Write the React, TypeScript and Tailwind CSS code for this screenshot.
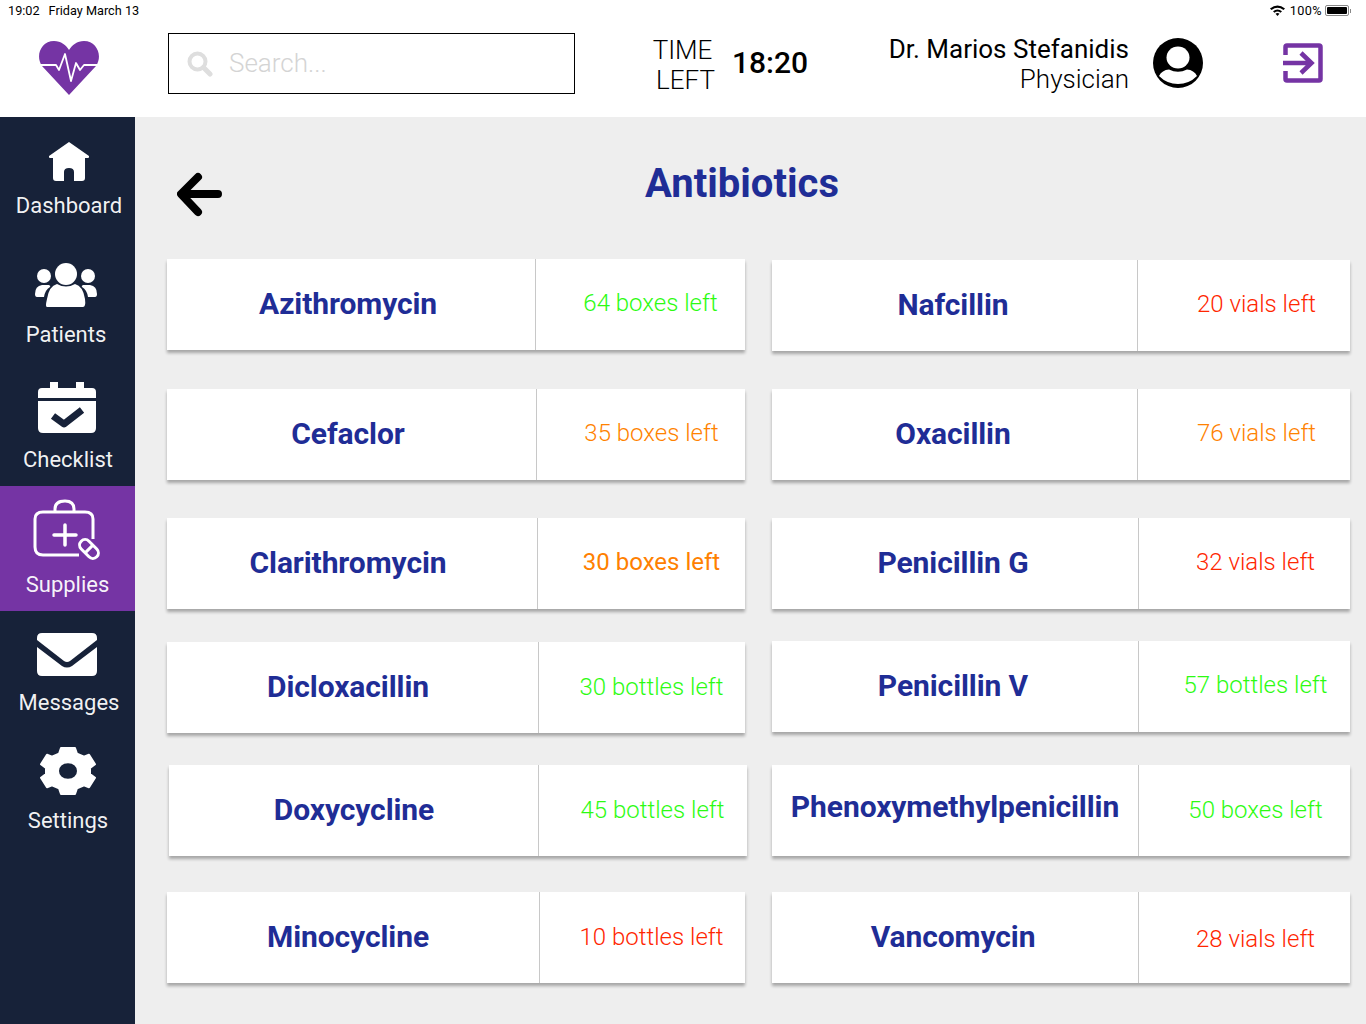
const green = "text-[#2dfb12]";
const orange = "text-[#ff8200]";
const red = "text-[#ff2600]";

const leftRows = [
  { name: "Azithromycin", qty: "64 boxes left", tone: green, box: "mt-[142px] ml-[32px]", nameBox: "w-[369px] pr-[6px] pb-[2px]", qtyBox: "pl-[20px] pb-[4px]" },
  { name: "Cefaclor", qty: "35 boxes left", tone: orange, box: "mt-[39px] ml-[32px]", nameBox: "w-[370px] pr-[7px] pb-[2px]", qtyBox: "pl-[21px] pb-[4px]" },
  { name: "Clarithromycin", qty: "30 boxes left", tone: "text-[#ff8000] font-normal", box: "mt-[38px] ml-[32px]", nameBox: "w-[371px] pr-[8px] pb-[2px]", qtyBox: "pl-[20px] pb-[4px]" },
  { name: "Dicloxacillin", qty: "30 bottles left", tone: green, box: "mt-[33px] ml-[32px]", nameBox: "w-[372px] pr-[9px] pb-[2px]", qtyBox: "pl-[19px] pb-[2px]" },
  { name: "Doxycycline", qty: "45 bottles left", tone: green, box: "mt-[32px] ml-[34px]", nameBox: "w-[370px] pl-[1px] pb-[2px]", qtyBox: "pl-[19px] pb-[2px]" },
  { name: "Minocycline", qty: "10 bottles left", tone: red, box: "mt-[36px] ml-[32px]", nameBox: "w-[373px] pr-[10px] pb-[2px]", qtyBox: "pl-[18px] pb-[2px]" },
];

const rightRows = [
  { name: "Nafcillin", qty: "20 vials left", tone: red, box: "mt-[143px]", nameBox: "w-[366px] pr-[3px] pb-[2px]", qtyBox: "pl-[25px] pb-[4px]" },
  { name: "Oxacillin", qty: "76 vials left", tone: orange, box: "mt-[38px]", nameBox: "w-[366px] pr-[3px] pb-[2px]", qtyBox: "pl-[25px] pb-[4px]" },
  { name: "Penicillin G", qty: "32 vials left", tone: red, box: "mt-[38px]", nameBox: "w-[367px] pr-[4px] pb-[2px]", qtyBox: "pl-[22px] pb-[4px]" },
  { name: "Penicillin V", qty: "57 bottles left", tone: green, box: "mt-[32px]", nameBox: "w-[367px] pr-[4px] pb-[2px]", qtyBox: "pl-[22px] pb-[4px]" },
  { name: "Phenoxymethylpenicillin", qty: "50 boxes left", tone: green, box: "mt-[33px]", nameBox: "w-[367px] pb-[9px]", qtyBox: "pl-[22px] pb-[2px]" },
  { name: "Vancomycin", qty: "28 vials left", tone: red, box: "mt-[36px]", nameBox: "w-[367px] pr-[4px] pb-[2px]", qtyBox: "pl-[22px] pt-[3px]" },
];

function HeartLogo() {
  return (
    <svg width="62" height="58" viewBox="0 0 62 58">
      <path d="M31 56 L4 27 C-3 17 3 2 16 2 C23 2 28 6 31 11 C34 6 39 2 46 2 C59 2 65 17 58 27 Z" fill="#7534a4" />
      <path d="M1 26 H18 L21 31 L27 15 L33 42 L38 24 L42 31 L46 26 H61" fill="none" stroke="#fff" strokeWidth="1.8" strokeLinejoin="round" />
    </svg>
  );
}

function HomeIcon() {
  return (
    <svg width="42" height="42" viewBox="0 0 42 42" fill="#fff">
      <path d="M21 1 L41 15 Q41.5 17 40 17 L37 17 L37 37 Q37 40 34 40 L26 40 L26 31 Q26 27 21 27 Q16 27 16 31 L16 40 L8 40 Q5 40 5 37 L5 17 L2 17 Q0.5 17 1 15 Z" />
    </svg>
  );
}

function UsersIcon() {
  return (
    <svg width="64" height="46" viewBox="0 0 64 46" fill="#fff">
      <circle cx="32" cy="12" r="11" />
      <circle cx="10" cy="14" r="7" />
      <circle cx="54" cy="14" r="7" />
      <path d="M13 45 Q11 45 13 37 Q15 24 23 22 Q32 27 41 22 Q49 24 51 37 Q52 45 49 45 Z" />
      <path d="M1 32 Q1 24 8 23 L15 23 Q17 24 16 25 Q11 28 10 35 L3 35 Q1 35 1 32 Z" />
      <path d="M63 32 Q63 24 56 23 L49 23 Q47 24 48 25 Q53 28 54 35 L61 35 Q63 35 63 32 Z" />
    </svg>
  );
}

function CalendarIcon() {
  return (
    <svg width="58" height="52" viewBox="0 0 58 52" fill="#fff" className="mr-[2px] mt-[1px] mb-[-1px]">
      <path d="M12 0 H20 V6 H38 V0 H46 V6 H54 Q58 6 58 10 V16 H0 V10 Q0 6 4 6 H12 Z" />
      <path d="M0 19 H58 V46 Q58 51 53 51 H5 Q0 51 0 46 Z" />
      <path d="M15 34 L26 42 L44 28" fill="none" stroke="#172239" strokeWidth="7" strokeLinejoin="round" />
    </svg>
  );
}

function SuppliesIcon() {
  return (
    <svg width="70" height="64" viewBox="0 0 70 64" fill="none" stroke="#fff" strokeWidth="3">
      <path d="M22 14 V10 Q22 2 32 2 Q41 2 41 10 V14" />
      <path d="M46 56 H10 Q2 56 2 48 V20 Q2 13 10 13 H52 Q60 13 60 20 V40" />
      <path d="M32 26 V46 M21 36 H43" strokeLinecap="round" strokeWidth="3.5" />
      <g transform="rotate(45 56 50)">
        <rect x="45" y="44.5" width="22" height="11" rx="5.5" fill="#7534a4" />
        <path d="M56 44.5 V55.5" />
      </g>
    </svg>
  );
}

function MailIcon() {
  return (
    <svg width="60" height="44" viewBox="0 0 60 44" fill="#fff" className="mr-[4px]">
      <path d="M0 5 Q0 0 5 0 H55 Q60 0 60 5 V7 L33 28 Q30 30 27 28 L0 7 Z" />
      <path d="M0 14 L25 33 Q30 36 35 33 L60 14 V38 Q60 43 55 43 H5 Q0 43 0 38 Z" />
    </svg>
  );
}

function GearIcon() {
  return (
    <svg width="56" height="48" viewBox="0 0 56 50" preserveAspectRatio="none" fill="#fff" stroke="#fff" strokeWidth="2" strokeLinejoin="round" fillRule="evenodd">
      <path d="M21 1 H35 L37 7 L44 10 L49 8 L55 18 L50 22 V28 L55 32 L49 42 L44 40 L37 43 L35 49 H21 L19 43 L12 40 L7 42 L1 32 L6 28 V22 L1 18 L7 8 L12 10 L19 7 Z M28 16 C22 16 18 20 18 25 C18 30 22 34 28 34 C34 34 38 30 38 25 C38 20 34 16 28 16 Z" />
    </svg>
  );
}

function LogoutIcon() {
  return (
    <svg width="40" height="40" viewBox="0 0 40 40" fill="none" stroke="#7534a4" strokeWidth="4.5">
      <path d="M2.5 12 V4 Q2.5 2.5 4 2.5 H36 Q37.5 2.5 37.5 4 V36 Q37.5 37.5 36 37.5 H4 Q2.5 37.5 2.5 36 V28" />
      <path d="M0 20 H28 M18 10 L28.5 20 L18 30" />
    </svg>
  );
}

function Avatar() {
  return (
    <svg width="50" height="50" viewBox="0 0 50 50">
      <circle cx="25" cy="25" r="25" fill="#000" />
      <ellipse cx="25" cy="19.5" rx="11.5" ry="11" fill="#fff" />
      <path d="M6 38 Q9 32 16 31.5 Q25 36 34 31.5 Q41 32 44 38 Q36 46 25 46 Q14 46 6 38 Z" fill="#fff" />
    </svg>
  );
}

function SearchIcon() {
  return (
    <svg width="26" height="26" viewBox="0 0 26 26" fill="none" stroke="#dedede">
      <circle cx="10.5" cy="10.5" r="8" strokeWidth="4" />
      <path d="M16.5 16.5 L23 23" strokeWidth="5" strokeLinecap="round" />
    </svg>
  );
}

function BackArrow() {
  return (
    <svg width="46" height="46" viewBox="0 0 46 46" fill="none" stroke="#000" strokeWidth="8" strokeLinecap="round" strokeLinejoin="round">
      <path d="M21 5 L4 22 L21 40 M6 22 H41" />
    </svg>
  );
}

function WifiIcon() {
  return (
    <svg width="15" height="11" viewBox="0 0 15 11" fill="#000">
      <path d="M0 3.5 Q7.5 -2.5 15 3.5 L13.5 5 Q7.5 0.5 1.5 5 Z" />
      <path d="M3 6.2 Q7.5 2.8 12 6.2 L10.5 7.7 Q7.5 5.5 4.5 7.7 Z" />
      <path d="M5.5 8.8 Q7.5 7.3 9.5 8.8 L7.5 11 Z" />
    </svg>
  );
}

function Battery() {
  return (
    <div className="flex items-center">
      <div className="w-[24px] h-[11px] rounded-[2px] border border-[#888] p-[1px]">
        <div className="w-full h-full bg-black rounded-[1px]" />
      </div>
      <div className="w-[1px] h-[4px] bg-[#888] ml-[1px]" />
    </div>
  );
}

function NavItem({ icon, label, box, active }: { icon: React.ReactNode; label: string; box: string; active?: boolean }) {
  return (
    <div className={`flex flex-col items-center ${box} ${active ? "bg-[#7534a4]" : ""}`}>
      {icon}
      <span className="text-[22px] leading-[26px] text-white/95">{label}</span>
    </div>
  );
}

function DrugCard({ row }: { row: { name: string; qty: string; tone: string; box: string; nameBox: string; qtyBox: string } }) {
  return (
    <div className={`flex h-[91px] w-[578px] bg-white shadow-[0_3px_3px_rgba(0,0,0,0.3)] ${row.box}`}>
      <div className={`flex shrink-0 items-center justify-center border-r border-[#c8c8c8] text-[#1f2d96] text-[30px] font-bold tracking-[-0.09px] ${row.nameBox}`}>
        {row.name}
      </div>
      <div className={`flex flex-1 items-center justify-center text-[24px] font-light ${row.tone} ${row.qtyBox}`}>{row.qty}</div>
    </div>
  );
}

export default function App() {
  return (
    <div className="w-[1366px] h-[1024px] overflow-hidden flex flex-col bg-white font-['Roboto',sans-serif]">
      {/* Header */}
      <header className="h-[117px] shrink-0 bg-white">
        <div className="flex items-center h-[22px] pl-[8px] pr-[15px] text-[12.7px] text-black">
          <span>19:02</span>
          <span className="ml-[9px]">Friday March 13</span>
          <div className="ml-auto flex items-center gap-[3px]">
            <WifiIcon />
            <span className="ml-[2px] tracking-[0.4px]">100%</span>
            <Battery />
          </div>
        </div>
        <div className="flex items-center h-[95px] pb-[12px]">
          <div className="w-[168px] shrink-0 pl-[38px] mt-[8px]">
            <HeartLogo />
          </div>
          <div className="flex items-center w-[407px] h-[61px] shrink-0 border border-black pl-[18px]">
            <SearchIcon />
            <span className="ml-[16px] text-[26px] font-light text-[#d4d4d4]">Search...</span>
          </div>
          <div className="ml-[78px] w-[62px] flex flex-col items-center mt-[2px] text-[26px] font-light leading-[30px] text-black">
            <span className="pr-[3px]">TIME</span>
            <span className="pl-[3px]">LEFT</span>
          </div>
          <div className="ml-[17px] mb-[2px] text-[30px] font-medium text-black">18:20</div>
          <div className="ml-auto flex flex-col items-end text-[26px] leading-[30px] text-black">
            <span>Dr. Marios Stefanidis</span>
            <span className="font-light">Physician</span>
          </div>
          <div className="ml-[24px] mb-[2px]">
            <Avatar />
          </div>
          <div className="ml-[80px] mr-[43px] mb-[2px]">
            <LogoutIcon />
          </div>
        </div>
      </header>

      <div className="flex flex-1 min-h-0">
        {/* Sidebar */}
        <aside className="w-[135px] shrink-0 bg-[#172239] flex flex-col">
          <NavItem icon={<HomeIcon />} label="Dashboard" box="h-[124px] pt-[24px] gap-[10px] pl-[3px]" />
          <NavItem icon={<UsersIcon />} label="Patients" box="h-[120px] pt-[21px] gap-[14px] pr-[3px]" />
          <NavItem icon={<CalendarIcon />} label="Checklist" box="h-[125px] pt-[20px] gap-[14px] pl-[1px]" />
          <NavItem icon={<SuppliesIcon />} label="Supplies" box="h-[125px] pt-[13px] gap-[9px]" active />
          <NavItem icon={<MailIcon />} label="Messages" box="h-[118px] pt-[22px] gap-[13px] pl-[3px]" />
          <NavItem icon={<GearIcon />} label="Settings" box="pt-[18px] gap-[13px] pl-[1px]" />
        </aside>

        {/* Content */}
        <main className="relative flex-1 bg-[#eeeeee] flex">
          <div className="absolute left-[42px] top-[55px]">
            <BackArrow />
          </div>
          <h1 className="absolute left-[510px] top-[43px] text-[40px] leading-[48px] font-bold text-[#1f2d96]">
            Antibiotics
          </h1>
          <div className="flex flex-col">
            {leftRows.map((r) => (
              <DrugCard key={r.name} row={r} />
            ))}
          </div>
          <div className="flex flex-col ml-[25px]">
            {rightRows.map((r) => (
              <DrugCard key={r.name} row={r} />
            ))}
          </div>
        </main>
      </div>
    </div>
  );
}
